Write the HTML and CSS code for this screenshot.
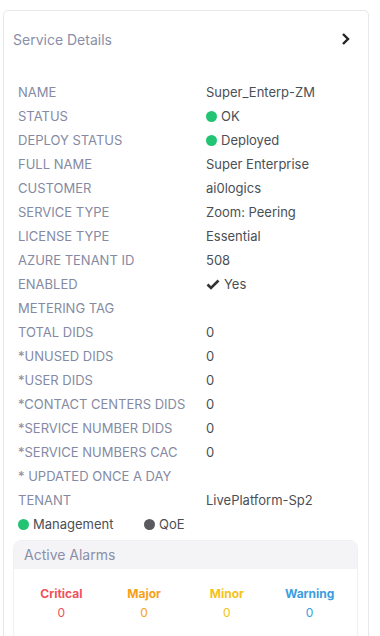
FILE: index.html
```html
<!DOCTYPE html>
<html lang="en">
<head>
  <meta charset="UTF-8">
  <meta name="viewport" content="width=device-width, initial-scale=1.0">
  <title>Service Details</title>
  <link rel="stylesheet" href="styles.css">
</head>
<body>
  <div class="card">
    <div class="card-header">
      <span class="card-title">Service Details</span>
      <svg class="chevron" width="10" height="14" viewBox="0 0 10 14"><path d="M2 2 L7 7 L2 12" fill="none" stroke="#222" stroke-width="2.4"/></svg>
    </div>

    <table class="details">
      <tr><td>NAME</td><td>Super_Enterp-ZM</td></tr>
      <tr><td>STATUS</td><td><span class="dot green"></span>OK</td></tr>
      <tr><td>DEPLOY STATUS</td><td><span class="dot green"></span>Deployed</td></tr>
      <tr><td>FULL NAME</td><td>Super Enterprise</td></tr>
      <tr><td>CUSTOMER</td><td>ai0logics</td></tr>
      <tr><td>SERVICE TYPE</td><td>Zoom: Peering</td></tr>
      <tr><td>LICENSE TYPE</td><td>Essential</td></tr>
      <tr><td>AZURE TENANT ID</td><td>508</td></tr>
      <tr><td>ENABLED</td><td><svg class="check" width="14" height="12" viewBox="0 0 14 12"><path d="M1.5 6.5 L5 10 L12.5 2.5" fill="none" stroke="#333" stroke-width="2.6"/></svg>Yes</td></tr>
      <tr><td>METERING TAG</td><td></td></tr>
      <tr><td>TOTAL DIDS</td><td>0</td></tr>
      <tr><td>*UNUSED DIDS</td><td>0</td></tr>
      <tr><td>*USER DIDS</td><td>0</td></tr>
      <tr><td>*CONTACT CENTERS DIDS</td><td>0</td></tr>
      <tr><td>*SERVICE NUMBER DIDS</td><td>0</td></tr>
      <tr><td>*SERVICE NUMBERS CAC</td><td>0</td></tr>
      <tr><td>* UPDATED ONCE A DAY</td><td></td></tr>
      <tr><td>TENANT</td><td>LivePlatform-Sp2</td></tr>
    </table>

    <div class="legend">
      <span class="legend-item"><span class="dot green"></span>Management</span>
      <span class="legend-item"><span class="dot gray"></span>QoE</span>
    </div>

    <div class="alarms">
      <div class="alarms-header">Active Alarms</div>
      <div class="alarms-body">
        <div class="alarm critical"><b>Critical</b><span>0</span></div>
        <div class="alarm major"><b>Major</b><span>0</span></div>
        <div class="alarm minor"><b>Minor</b><span>0</span></div>
        <div class="alarm warning"><b>Warning</b><span>0</span></div>
      </div>
    </div>
  </div>
</body>
</html>
```

FILE: styles.css
```css
body {
  margin: 0;
  background-color: #fff;
  font-family: Inter, "Noto Sans", sans-serif;
  color: #495057;
}

.card {
  width: 364px;
  margin: 10px 0 0 3px;
  border: 1px solid #e8e8ec;
  border-radius: 5px;
  padding-bottom: 20px;
}

.card-header {
  display: flex;
  align-items: center;
  justify-content: space-between;
  padding: 18px 17px 0 9px;
  height: 20px;
}

.card-title {
  font-size: 14px;
  color: #8a8fa8;
}

.details {
  border-collapse: collapse;
  margin: 31px 0 0 14px;
  font-size: 13px;
}

.details td {
  height: 24px;
  padding: 0;
  white-space: nowrap;
}

.details td:first-child {
  width: 188px;
  color: #858aa3;
}

.details td:last-child {
  color: #4a4f55;
}

.dot {
  display: inline-block;
  width: 11px;
  height: 11px;
  border-radius: 50%;
  margin-right: 4px;
  vertical-align: -1px;
}

.dot.green {
  background-color: #22c474;
}

.dot.gray {
  background-color: #5b5b5f;
}

.check {
  margin-right: 4px;
  vertical-align: -1px;
}

.legend {
  display: flex;
  margin-left: 14px;
  height: 24px;
  align-items: center;
  font-size: 13px;
  color: #4a4f55;
}

.legend-item {
  width: 126px;
}

.alarms {
  margin: 4px 10px 0 9px;
  border: 1px solid #f0f0f3;
  border-radius: 8px;
  overflow: hidden;
}

.alarms-header {
  background-color: #f4f4f6;
  height: 28px;
  line-height: 28px;
  padding-left: 10px;
  font-size: 14px;
  color: #8a8fa8;
}

.alarms-body {
  display: flex;
  padding: 17px 6px 20px;
}

.alarm {
  flex: 1;
  display: flex;
  flex-direction: column;
  align-items: center;
  font-size: 12px;
  gap: 4px;
}

.alarm b {
  font-weight: 700;
}

.critical { color: #f0515b; }
.major { color: #f7a11a; }
.minor { color: #f4c31b; }
.warning { color: #3b9ee0; }
```
